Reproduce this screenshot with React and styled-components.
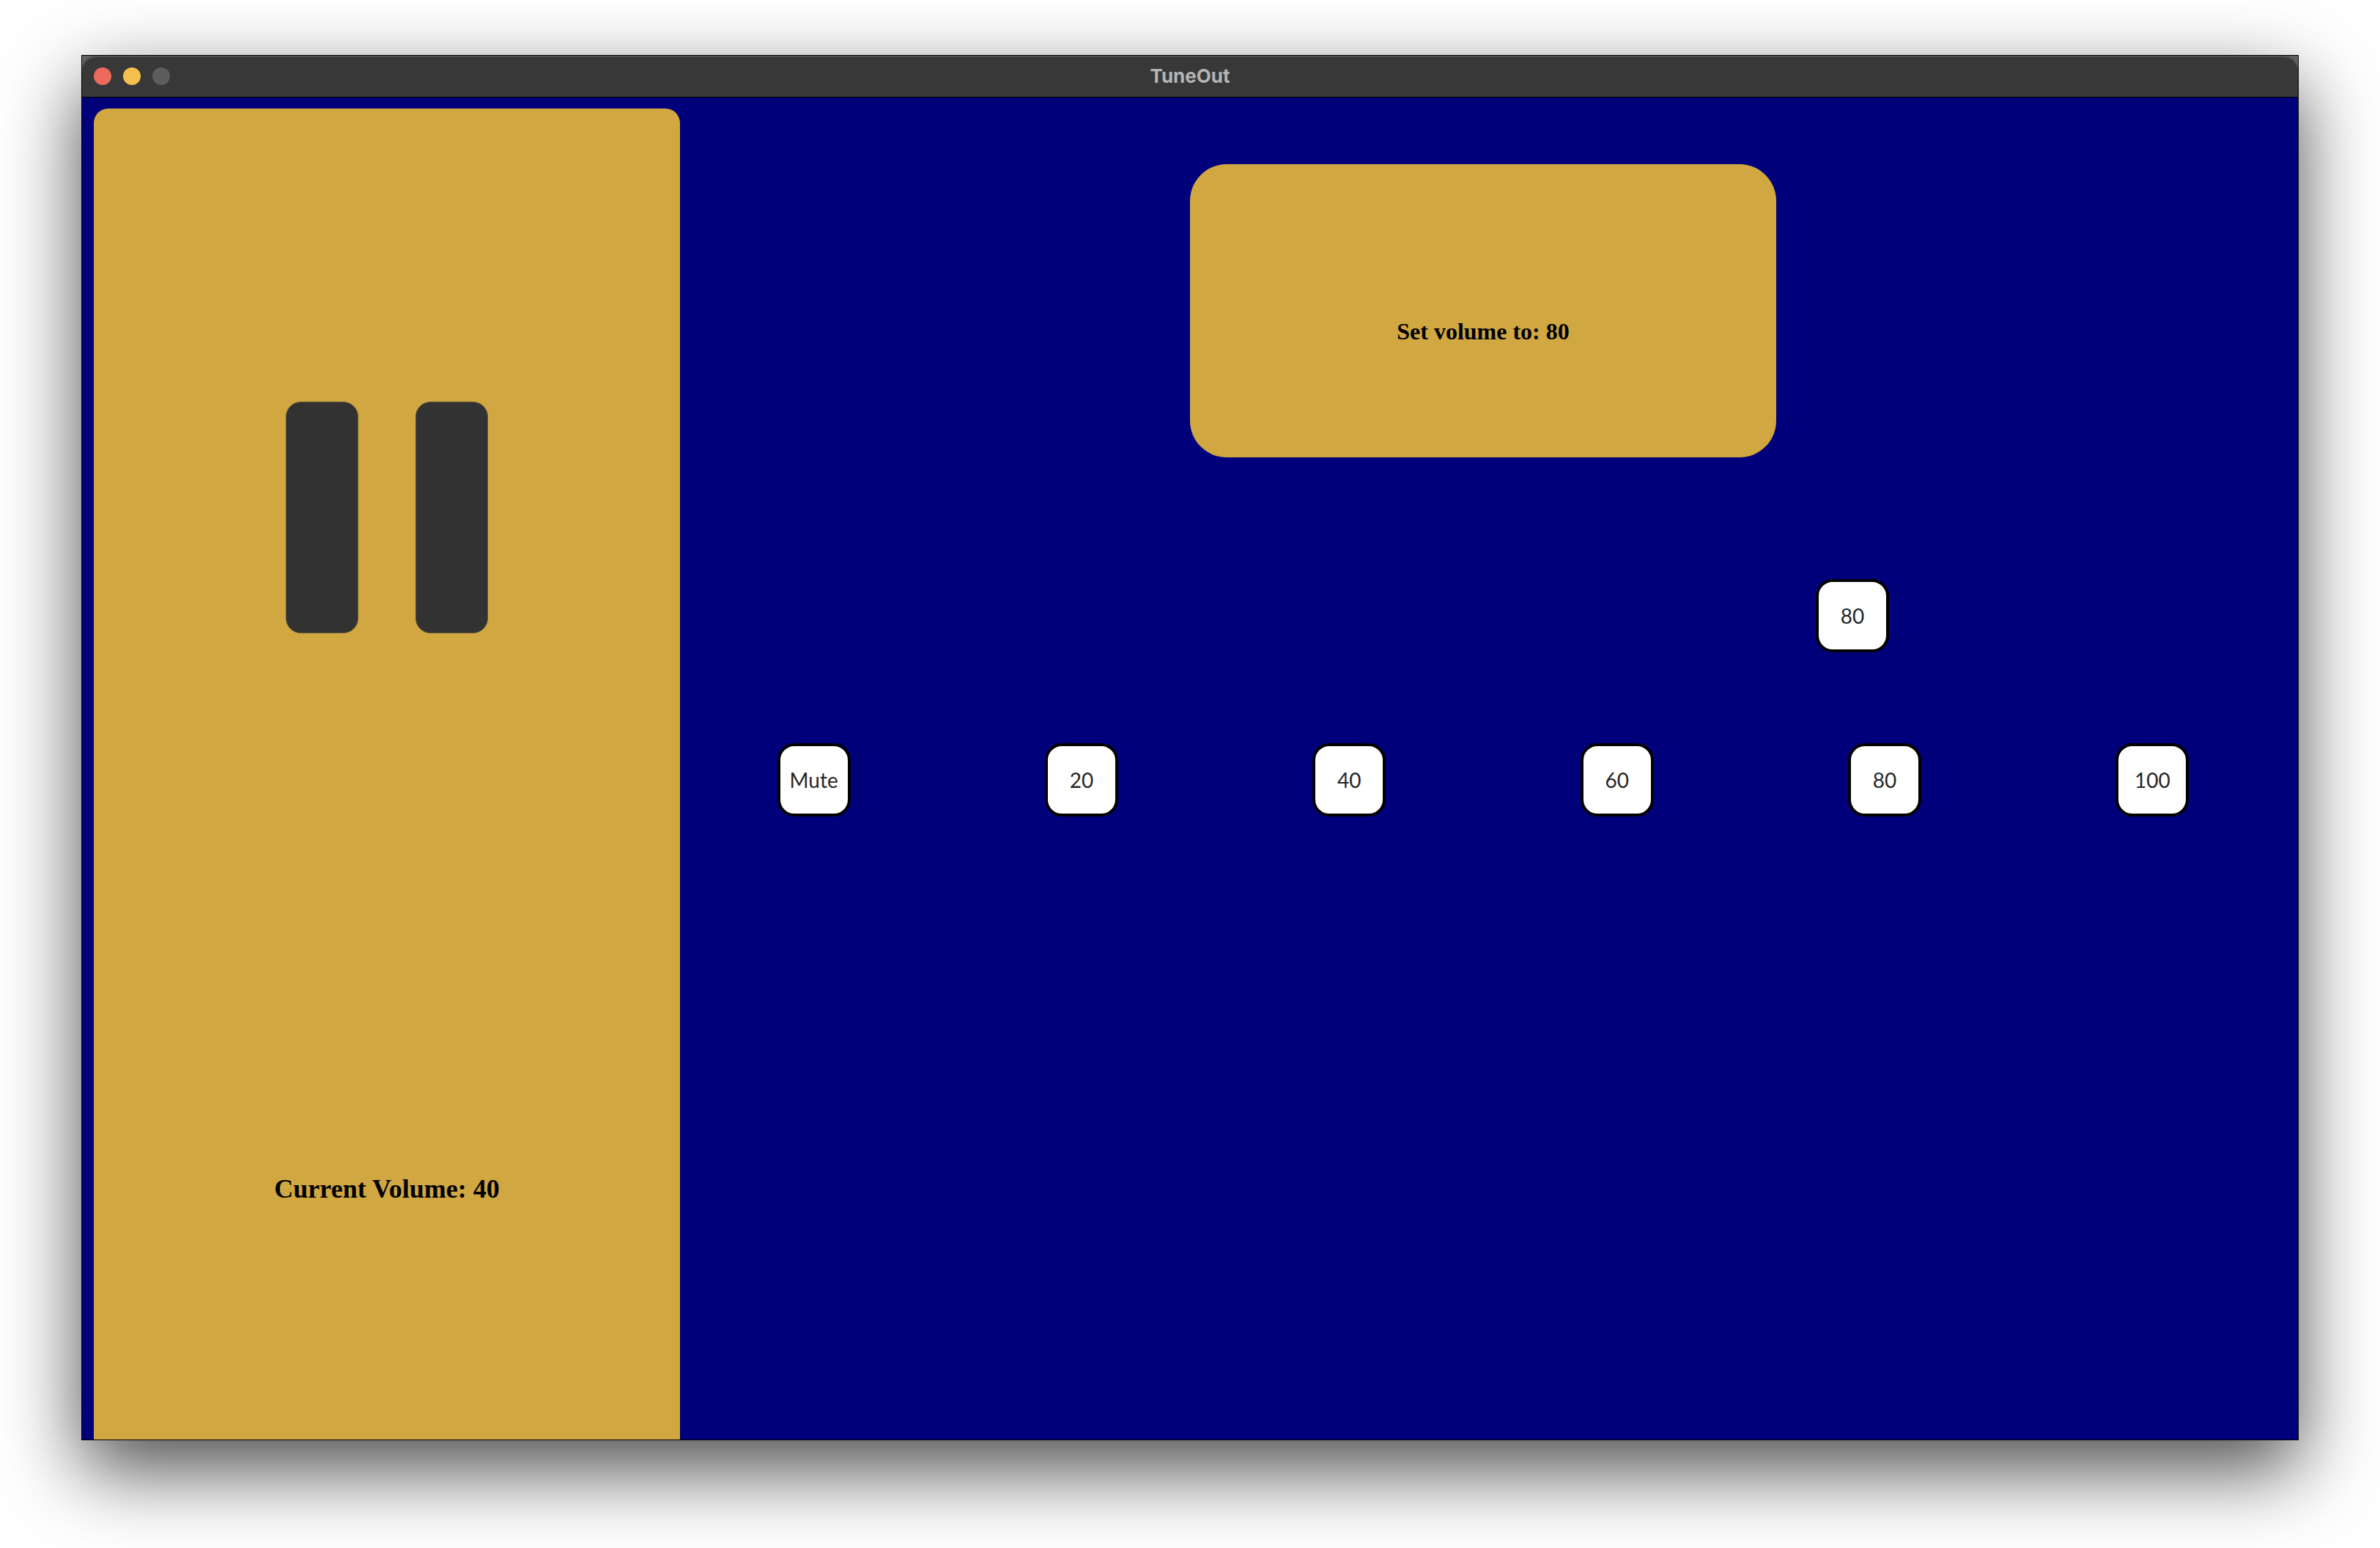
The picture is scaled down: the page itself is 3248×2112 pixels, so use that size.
import React, { useState } from "react";
import styled, { createGlobalStyle } from "styled-components";

const GlobalStyle = createGlobalStyle`
  *, *::before, *::after {
    box-sizing: border-box;
  }
  body {
    margin: 0;
    background: #ffffff;
  }
  button {
    margin: 0;
    padding: 0;
    border: 0;
    background: none;
    cursor: pointer;
  }
`;

const Desktop = styled.div`
  display: flex;
  flex-direction: column;
  min-height: 100vh;
  padding: 75px 111px 147px;
`;

const AppWindow = styled.div`
  flex: 1;
  display: flex;
  flex-direction: column;
  border: 1px solid #000000;
  background: #00007b;
  box-shadow: 0 40px 100px rgba(0, 0, 0, 0.7);
`;

const TitleBarFrame = styled.header`
  background: #616161;
`;

const TitleBar = styled.div`
  display: grid;
  grid-template-columns: 1fr auto 1fr;
  align-items: center;
  height: 56px;
  padding: 0 16px;
  border-radius: 20px 20px 0 0;
  background: #383838;
  box-shadow: inset 0 2px 0 #535353;
`;

const WindowControls = styled.div`
  display: flex;
  gap: 16px;
`;

const WindowControl = styled.button`
  width: 24px;
  height: 24px;
  border-radius: 50%;
  background: ${({ $color }) => $color};
`;

const WindowTitle = styled.h1`
  margin: 0;
  font: 700 26px/32px Inter, "Liberation Sans", sans-serif;
  color: #b4b4b4;
`;

const Content = styled.div`
  flex: 1;
  display: grid;
  grid-template-columns: 800px 1fr;
  padding: 16px 16px 0;
  box-shadow: inset 0 1px 0 #000000;
`;

const Player = styled.aside`
  display: flex;
  flex-direction: column;
  align-items: center;
  gap: 738px;
  padding-top: 400px;
  border-radius: 20px 20px 0 0;
  background: #d1a741;
`;

const PauseButton = styled.button`
  display: block;

  svg {
    display: block;
  }
`;

const Caption = styled.h2`
  margin: 0;
  font-family: "Liberation Serif", "Times New Roman", serif;
  font-weight: 700;
  font-size: ${({ $size }) => $size}px;
  line-height: 40px;
  color: #000000;
`;

const Main = styled.main`
  display: flex;
  flex-direction: column;
  align-items: center;
  gap: 390px;
  padding-top: 76px;
`;

const DropZone = styled.section`
  display: flex;
  justify-content: center;
  width: 800px;
  height: 400px;
  padding-top: 208px;
  border-radius: 50px;
  background: #d1a741;
`;

const Levels = styled.div`
  display: grid;
  grid-template-columns: repeat(6, 1fr);
  justify-items: center;
  width: 100%;
`;

const LevelSlot = styled.div`
  position: relative;
`;

const LevelTile = styled.button`
  width: 100px;
  height: 100px;
  border: 4px solid #000000;
  border-radius: 23px;
  background: #ffffff;
  font: 400 28px/32px Lato, "Open Sans", sans-serif;
  color: #262626;
`;

const DraggedTile = styled(LevelTile)`
  position: absolute;
  left: -44px;
  top: -224px;
`;

const LEVELS = [
  { value: 0, label: "Mute" },
  { value: 20, label: "20" },
  { value: 40, label: "40" },
  { value: 60, label: "60" },
  { value: 80, label: "80" },
  { value: 100, label: "100" },
];

const CONTROLS = [
  { label: "Close", color: "#ed6a5e" },
  { label: "Minimize", color: "#f5bf4f" },
  { label: "Zoom", color: "#5d5d5d" },
];

function PauseIcon() {
  return (
    <svg width="276" height="316" viewBox="0 0 276 316" aria-hidden="true">
      <g fill="#323232" stroke="#5a4f34" strokeWidth="1">
        <rect x="0.5" y="0.5" width="98" height="315" rx="20" />
        <rect x="177.5" y="0.5" width="98" height="315" rx="20" />
      </g>
    </svg>
  );
}

export default function App() {
  const [current, setCurrent] = useState(40);
  const target = 80;

  return (
    <>
      <GlobalStyle />
      <Desktop>
        <AppWindow>
          <TitleBarFrame>
            <TitleBar>
              <WindowControls>
                {CONTROLS.map(({ label, color }) => (
                  <WindowControl key={label} type="button" aria-label={label} $color={color} />
                ))}
              </WindowControls>
              <WindowTitle>TuneOut</WindowTitle>
            </TitleBar>
          </TitleBarFrame>
          <Content>
            <Player>
              <PauseButton type="button" aria-label="Pause">
                <PauseIcon />
              </PauseButton>
              <Caption $size={36}>Current Volume: {current}</Caption>
            </Player>
            <Main>
              <DropZone>
                <Caption $size={32}>Set volume to: {target}</Caption>
              </DropZone>
              <Levels>
                {LEVELS.map(({ value, label }) => (
                  <LevelSlot key={value}>
                    <LevelTile type="button" onClick={() => setCurrent(value)}>
                      {label}
                    </LevelTile>
                    {value === target && <DraggedTile type="button">{label}</DraggedTile>}
                  </LevelSlot>
                ))}
              </Levels>
            </Main>
          </Content>
        </AppWindow>
      </Desktop>
    </>
  );
}
